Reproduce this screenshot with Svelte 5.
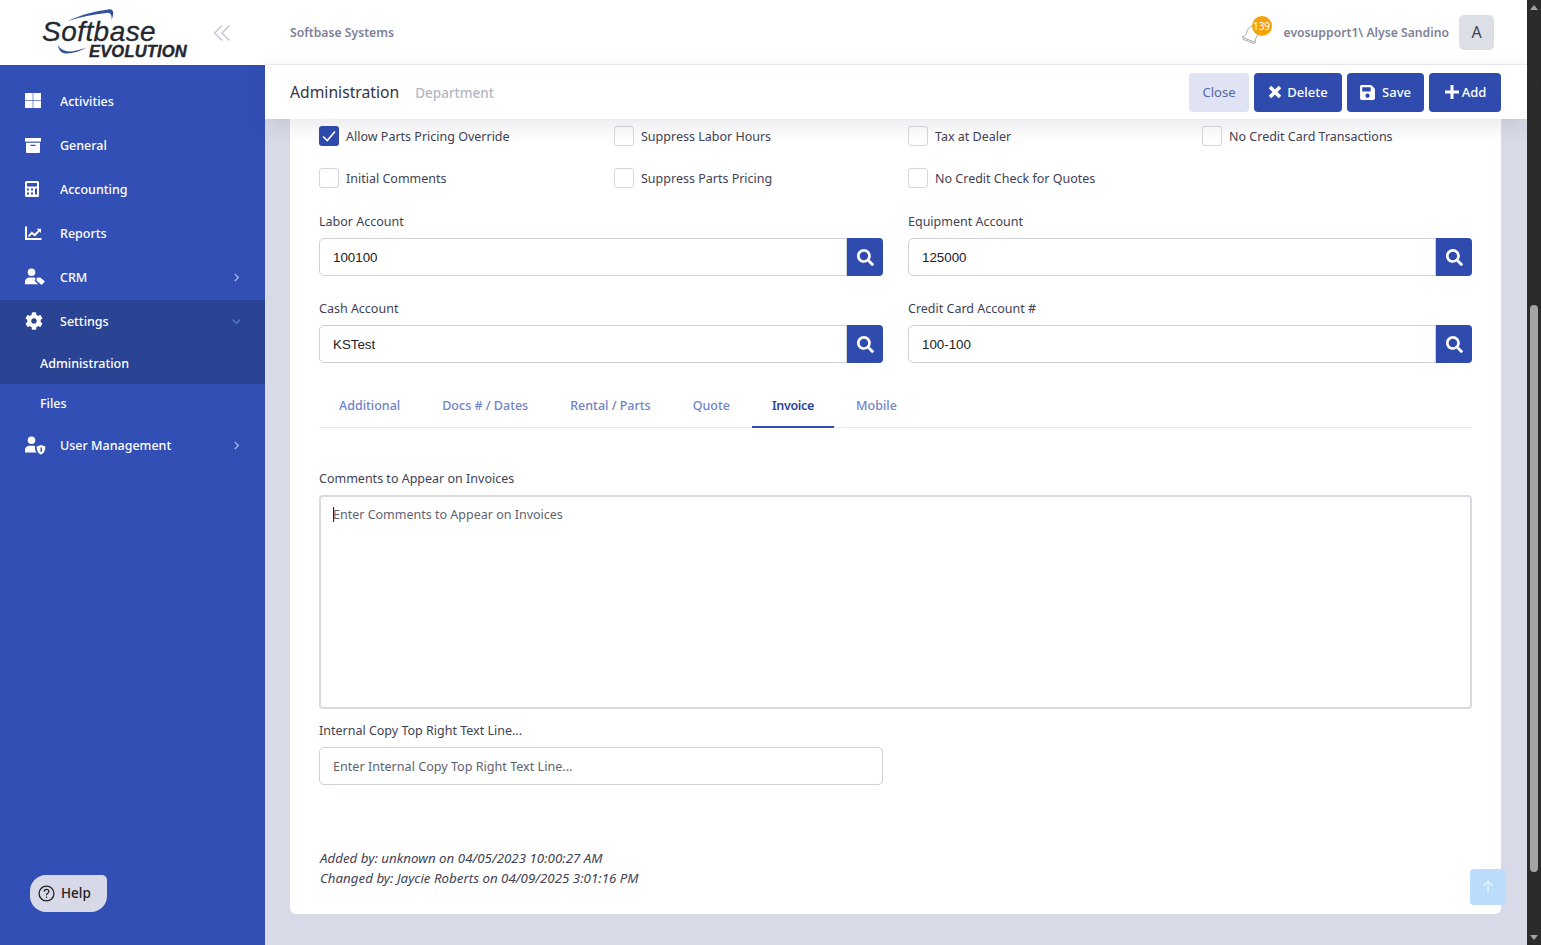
<script>
	const nav = [
		{ name: "Activities", icon: "grid" },
		{ name: "General", icon: "archive" },
		{ name: "Accounting", icon: "calc" },
		{ name: "Reports", icon: "chart" },
		{ name: "CRM", icon: "usertag", arrow: "right" },
	]
	const checks = [
		{ label: "Allow Parts Pricing Override", on: true },
		{ label: "Suppress Labor Hours" },
		{ label: "Tax at Dealer" },
		{ label: "No Credit Card Transactions" },
		{ label: "Initial Comments" },
		{ label: "Suppress Parts Pricing" },
		{ label: "No Credit Check for Quotes" },
	]
	const accounts = [
		{ label: "Labor Account", value: "100100" },
		{ label: "Equipment Account", value: "125000" },
		{ label: "Cash Account", value: "KSTest" },
		{ label: "Credit Card Account #", value: "100-100" },
	]
	const tabs = ["Additional", "Docs # / Dates", "Rental / Parts", "Quote", "Invoice", "Mobile"]
	const cog = "M487.4 315.7l-42.6-24.6c4.3-23.2 4.3-47 0-70.2l42.6-24.6c4.9-2.8 7.1-8.6 5.5-14-11.1-35.6-30-67.8-54.7-94.6-3.8-4.1-10-5.1-14.8-2.3L380.8 110c-17.9-15.4-38.5-27.3-60.8-35.1V25.8c0-5.6-3.9-10.5-9.4-11.7-36.7-8.2-74.3-7.8-109.2 0-5.5 1.2-9.4 6.1-9.4 11.7V75c-22.2 7.9-42.8 19.8-60.8 35.1L88.7 85.5c-4.9-2.8-11-1.9-14.8 2.3-24.7 26.7-43.6 58.9-54.7 94.6-1.7 5.4.6 11.2 5.5 14L67.3 221c-4.3 23.2-4.3 47 0 70.2l-42.6 24.6c-4.9 2.8-7.1 8.6-5.5 14 11.1 35.6 30 67.8 54.7 94.6 3.8 4.1 10 5.1 14.8 2.3l42.6-24.6c17.9 15.4 38.5 27.3 60.8 35.1v49.2c0 5.6 3.9 10.5 9.4 11.7 36.7 8.2 74.3 7.8 109.2 0 5.5-1.2 9.4-6.1 9.4-11.7v-49.2c22.2-7.9 42.8-19.8 60.8-35.1l42.6 24.6c4.9 2.8 11 1.9 14.8-2.3 24.7-26.7 43.6-58.9 54.7-94.6 1.5-5.5-.7-11.3-5.6-14.1zM256 336c-44.1 0-80-35.9-80-80s35.9-80 80-80 80 35.9 80 80-35.9 80-80 80z"
	const search = "M505 442.7L405.3 343c-4.5-4.5-10.6-7-17-7H372c27.6-35.3 44-79.7 44-128C416 93.1 322.9 0 208 0S0 93.1 0 208s93.1 208 208 208c48.3 0 92.7-16.4 128-44v16.3c0 6.4 2.5 12.5 7 17l99.7 99.7c9.4 9.4 24.6 9.4 33.9 0l28.3-28.3c9.4-9.4 9.4-24.6.1-34zM208 336c-70.7 0-128-57.2-128-128 0-70.7 57.2-128 128-128 70.7 0 128 57.2 128 128 0 70.7-57.2 128-128 128z"
	const save = "M433.941 129.941l-83.882-83.882A48 48 0 0 0 316.118 32H48C21.49 32 0 53.49 0 80v352c0 26.51 21.49 48 48 48h352c26.51 0 48-21.49 48-48V163.882a48 48 0 0 0-14.059-33.941zM224 416c-35.346 0-64-28.654-64-64 0-35.346 28.654-64 64-64s64 28.654 64 64c0 35.346-28.654 64-64 64zm96-304.52V212c0 6.627-5.373 12-12 12H76c-6.627 0-12-5.373-12-12V108c0-6.627 5.373-12 12-12h228.52c3.183 0 6.235 1.264 8.485 3.515l3.48 3.48A11.996 11.996 0 0 1 320 111.48z"
</script>

{#snippet navIcon(icon)}
	<svg class="nav-icon" viewBox="0 0 20 20" fill="#fff">
		{#if icon === "grid"}
			<rect x="1" y="2" width="7.700" height="7.200" /><rect x="9.300" y="2" width="7.700" height="7.200" /><rect x="1" y="9.800" width="7.700" height="7.200" /><rect x="9.300" y="9.800" width="7.700" height="7.200" />
		{:else if icon === "archive"}
			<rect x="1" y="3" width="16" height="3.600" /><path d="M2 7.800h14V17a1 1 0 0 1-1 1H3a1 1 0 0 1-1-1zM6.500 9.800v1.200h5V9.800z" fill-rule="evenodd" />
		{:else if icon === "calc"}
			<path d="M2.500 2h11A1.500 1.500 0 0 1 15 3.500v13a1.500 1.500 0 0 1-1.500 1.500h-11A1.500 1.500 0 0 1 1 16.500v-13A1.500 1.500 0 0 1 2.500 2zM3 4v3.500h10V4zM3 9.500v2h2v-2zM7 9.500v2h2v-2zM11 9.500v6h2v-6zM3 13.500v2h2v-2zM7 13.500v2h2v-2z" fill-rule="evenodd" />
		{:else if icon === "chart"}
			<path d="M1 3.500h2v11.500h14.500v2H1z" /><path d="M4.500 12l3.200-3.400 3 2.200 3.400-3.600-1.500-1.500h4.400v4.400l-1.500-1.500-4.600 4.900-3-2.200-3.400 3.300z" />
		{:else if icon === "usertag"}
			<circle cx="7.500" cy="5.200" r="3.800" /><path d="M1 17.200v-2.400c0-2.600 2.200-4.400 4.500-4.400h4.500l1.800.8-1.300 2.300 3.600 3.700z" /><path d="M12.800 10.800l3.400-.4 4.800 4-3.300 3.600-5.200-4.200z" />
		{:else if icon === "usershield"}
			<circle cx="7.500" cy="5.200" r="3.800" /><path d="M1 17.500v-2.400c0-2.600 2.200-4.400 4.500-4.400h4.700l.8.500v2.300c0 1.500.6 2.900 1.700 4z" /><path d="M17 10l4.300 1.500c0 3.800-1 6.700-4.300 8-3.300-1.300-4.300-4.200-4.300-8zM16.500 12.500v4.800l1.500-.8v-4z" fill-rule="evenodd" />
		{/if}
	</svg>
{/snippet}

<div class="page">
	<aside class="sidebar">
		<div class="brand">
			<div class="logo">
				<svg class="swoosh" viewBox="0 0 146 50" fill="#35509f">
					<path d="M26 13C38 7 54 3 66 1.500c5-.8 7 2 3.500 11 .8-5-.8-8-5-7.600C52 6 38 9 26 13z" />
					<path d="M16 37c.500 5 3 8 8 8.500 6 .3 13-2 21-6-8 2.500-15 4.500-20 3.800-4-.6-7-2.800-9-6.300z" />
				</svg>
				<span class="logo-top">Softbase</span>
				<span class="logo-bottom">EVOLUTION</span>
			</div>
			<svg class="collapse" viewBox="0 0 18 18" fill="none" stroke="#c4c9d4" stroke-width="1.600"><path d="M9 1.500L1.500 9 9 16.500M16.500 1.500L9 9l7.500 7.500" /></svg>
		</div>
		<nav class="nav">
			{#each nav as item}
				<div class="nav-row">
					{@render navIcon(item.icon)}
					<span>{item.name}</span>
					{#if item.arrow}
						<svg class="arrow" viewBox="0 0 8 10" fill="none" stroke="#b8c4ea" stroke-width="1.200"><path d="M2 1l4 4-4 4" /></svg>
					{/if}
				</div>
			{/each}
			<div class="open-group">
				<div class="nav-row">
					<svg class="nav-icon" viewBox="-14 -30 540 572" fill="#fff"><path d={cog} /></svg>
					<span>Settings</span>
					<svg class="arrow" viewBox="0 0 10 8" fill="none" stroke="#5f8be6" stroke-width="1.200"><path d="M1 2l4 4 4-4" /></svg>
				</div>
				<div class="sub-row">Administration</div>
			</div>
			<div class="sub-row files">Files</div>
			<div class="nav-row">
				{@render navIcon("usershield")}
				<span>User Management</span>
				<svg class="arrow" viewBox="0 0 8 10" fill="none" stroke="#b8c4ea" stroke-width="1.200"><path d="M2 1l4 4-4 4" /></svg>
			</div>
		</nav>
		<button class="help">
			<svg viewBox="0 0 16 16" width="17" height="17" fill="none" stroke="#222" stroke-width="1.200"><circle cx="8" cy="8" r="7" /><path d="M5.800 6.200C5.900 4.900 6.900 4.200 8 4.200c1.300 0 2.200.8 2.200 1.900 0 1.800-2.200 1.700-2.200 3.500" /><path d="M8 11v1.200" /></svg>
			Help
		</button>
	</aside>

	<main class="main">
		<header class="topbar">
			<span class="company">Softbase Systems</span>
			<div class="user">
				<div class="bell">
					<svg viewBox="0 0 20 20" width="20" height="20" fill="none" stroke="#a3a8b4" stroke-width="1"><path d="M11 2C8 3 6 6 5.500 9 5 11 3 12.500 1 13l13.500 5.500c-.5-2-.2-4 1-5.500 1.500-2 2.300-5 1-7.500-1-2.300-3.500-4-5.500-3.500zM1.500 15l12.500 5" /></svg>
					<span class="badge">139</span>
				</div>
				<span class="username">evosupport1\ Alyse Sandino</span>
				<span class="avatar">A</span>
			</div>
		</header>
		<div class="toolbar">
			<div class="crumbs">
				<span class="crumb-title">Administration</span>
				<span class="crumb-sub">Department</span>
			</div>
			<div class="actions">
				<button class="btn close">Close</button>
				<button class="btn">
					<svg viewBox="0 0 14 14" width="14" height="14" fill="none" stroke="#fff" stroke-width="3.600"><path d="M2 2l10 10M12 2L2 12" /></svg>
					Delete
				</button>
				<button class="btn save-btn">
					<svg viewBox="0 0 448 512" width="15" height="17" fill="#fff"><path d={save} /></svg>
					Save
				</button>
				<button class="btn add-btn">
					<svg viewBox="0 0 16 16" width="16" height="16" fill="none" stroke="#fff" stroke-width="3"><path d="M8 1v14M1 8h14" /></svg>
					Add
				</button>
			</div>
		</div>

		<div class="scroller">
			<section class="card">
				<div class="checks">
					{#each checks as c}
						<div class="check">
							<span class="box" class:on={c.on}>
								{#if c.on}
									<svg viewBox="0 0 20 20" width="20" height="20" fill="none" stroke="#fff" stroke-width="1.700"><path d="M4 10.500l4.300 4L16 5.500" /></svg>
								{/if}
							</span>
							<span>{c.label}</span>
						</div>
					{/each}
				</div>
				<div class="accounts">
					{#each accounts as a}
						<div class="field">
							<div class="label">{a.label}</div>
							<div class="lookup">
								<input class="input mono" value={a.value} />
								<button class="find" aria-label="Search">
									<svg viewBox="0 0 512 512" width="17" height="17" fill="#fff"><path d={search} /></svg>
								</button>
							</div>
						</div>
					{/each}
				</div>
				<div class="tabs">
					{#each tabs as t}
						<div class="tab" class:active={t === "Invoice"}>{t}</div>
					{/each}
				</div>
				<div class="label comments-label">Comments to Appear on Invoices</div>
				<div class="textarea"><span class="caret"></span>Enter Comments to Appear on Invoices</div>
				<div class="label internal-label">Internal Copy Top Right Text Line...</div>
				<input class="input internal" placeholder="Enter Internal Copy Top Right Text Line..." />
				<div class="audit">
					<div>Added by: unknown on 04/05/2023 10:00:27 AM</div>
					<div>Changed by: Jaycie Roberts on 04/09/2025 3:01:16 PM</div>
				</div>
			</section>
			<button class="to-top" aria-label="Back to top">
				<svg viewBox="0 0 14 14" width="14" height="14" fill="none" stroke="#e6f2fe" stroke-width="1.400"><path d="M7 13V1.500M2.500 6L7 1.500 11.500 6" /></svg>
			</button>
		</div>
	</main>

	<div class="scrollbar">
		<span class="tri up"></span>
		<div class="track"><div class="thumb"></div></div>
		<span class="tri down"></span>
	</div>
</div>

<style>
	:global(body) {
		margin: 0;
		overflow: hidden;
		font-family: "Noto Sans", sans-serif;
	}

	.page {
		display: flex;
		width: 1541px;
		height: 945px;
		overflow: hidden;
		font-size: 12.500px;
		color: #3f4254;
		background: #d9dae7;
	}

	button {
		font-family: inherit;
		border: none;
	}

	.sidebar {
		width: 265px;
		flex: none;
		display: flex;
		flex-direction: column;
		background: #324fb5;
		color: #fff;
	}

	.brand {
		height: 65px;
		flex: none;
		display: flex;
		align-items: center;
		background: #fff;
		padding-left: 42px;
		box-sizing: border-box;
	}

	.logo {
		position: relative;
		width: 146px;
		height: 50px;
		color: #25272e;
	}

	.swoosh {
		position: absolute;
		left: 0;
		top: 0;
		width: 146px;
		height: 50px;
	}

	.logo-top {
		position: absolute;
		left: 0;
		top: 12px;
		font: italic 400 28px/24px "Liberation Sans", sans-serif;
		letter-spacing: 0.450px;
		-webkit-text-stroke: 0.300px #25272e;
	}

	.logo-bottom {
		position: absolute;
		right: 1px;
		top: 36px;
		font: italic 700 16.500px/14px "Liberation Sans", sans-serif;
		letter-spacing: 0.200px;
		-webkit-text-stroke: 0.400px #25272e;
	}

	.collapse {
		width: 18px;
		height: 18px;
		margin-left: 25px;
	}

	.nav {
		padding-top: 14px;
		font-weight: 500;
	}

	.nav-row {
		height: 44px;
		display: flex;
		align-items: center;
		padding-left: 24px;
		padding-right: 24px;
		position: relative;
	}

	.nav-row > span {
		flex: 1;
		margin-left: 16px;
	}

	.nav-icon {
		width: 20px;
		height: 20px;
		flex: none;
		overflow: visible;
	}

	.arrow {
		width: 9px;
		height: 9px;
		flex: none;
	}

	.open-group {
		background: #2a4493;
		margin-top: 1px;
	}

	.sub-row {
		display: flex;
		align-items: center;
		padding-left: 40px;
		font-weight: 500;
	}

	.files {
		height: 39px;
	}

	.open-group .nav-row {
		height: 42px;
	}

	.open-group .sub-row {
		height: 42px;
	}

	.help {
		margin: auto 0 33px 30px;
		width: 77px;
		height: 37px;
		display: flex;
		align-items: center;
		gap: 6px;
		padding: 0 0 1px 8px;
		background: #d8d9e8;
		color: #222;
		font-size: 13.500px;
		font-weight: 500;
		border-radius: 16px 5px 16px 16px;
	}

	.main {
		flex: 1;
		min-width: 0;
		display: flex;
		flex-direction: column;
	}

	.topbar {
		height: 65px;
		flex: none;
		box-sizing: border-box;
		display: flex;
		align-items: center;
		justify-content: space-between;
		padding: 0 33px 0 25px;
		background: #fff;
		border-bottom: 1px solid #eceef3;
	}

	.company {
		font-weight: 600;
		font-size: 12.200px;
		color: #7e8299;
	}

	.user {
		display: flex;
		align-items: center;
	}

	.bell {
		position: relative;
		width: 20px;
		height: 20px;
		margin-right: 23px;
		margin-top: 4px;
	}

	.badge {
		position: absolute;
		left: 11px;
		top: -8px;
		width: 20px;
		height: 20px;
		border-radius: 50%;
		background: #f5a30a;
		color: #fff;
		font-size: 10px;
		line-height: 20px;
		text-align: center;
	}

	.username {
		font-weight: 600;
		color: #7e8299;
		font-size: 12.200px;
		margin-right: 10px;
	}

	.avatar {
		width: 35px;
		height: 35px;
		border-radius: 5px;
		background: #dcdfe5;
		color: #3f4254;
		font-size: 16px;
		display: flex;
		align-items: center;
		justify-content: center;
	}

	.toolbar {
		height: 54px;
		flex: none;
		box-sizing: border-box;
		display: flex;
		align-items: center;
		justify-content: space-between;
		padding: 0 26px 0 25px;
		background: #fff;
		box-shadow: 0 6px 22px rgba(60, 60, 90, 0.12);
		position: relative;
		z-index: 2;
	}

	.crumbs {
		display: flex;
		align-items: baseline;
		gap: 16px;
	}

	.crumb-title {
		font-size: 15.700px;
		color: #333541;
	}

	.crumb-sub {
		font-size: 13.500px;
		font-weight: 500;
		color: #b5b5c3;
	}

	.actions {
		display: flex;
		gap: 5px;
	}

	.btn {
		height: 39px;
		display: flex;
		align-items: center;
		justify-content: center;
		gap: 5px;
		background: #2f4bae;
		color: #fff;
		border-radius: 4px;
		font-size: 13px;
		font-weight: 500;
		width: 88px;
		padding: 0;
	}

	.close {
		width: 60px;
		background: #dfe3f3;
		color: #5468a8;
		font-weight: 400;
	}

	.save-btn {
		width: 77px;
		gap: 7px;
	}

	.add-btn {
		width: 72px;
		gap: 2px;
	}

	.scroller {
		flex: 1;
		min-height: 0;
		position: relative;
		padding: 0 26px 0 25px;
	}

	.card {
		height: 795px;
		box-sizing: border-box;
		background: #fff;
		border-radius: 0 0 6px 6px;
		padding: 7px 29px 0 29px;
	}

	.checks {
		display: grid;
		grid-template-columns: 295px 294px 294px 270px;
		row-gap: 22px;
	}

	.check {
		display: flex;
		align-items: center;
		gap: 7px;
		height: 20px;
	}

	.box {
		width: 20px;
		height: 20px;
		box-sizing: border-box;
		border: 1px solid #d5d6dc;
		border-radius: 3px;
		flex: none;
		background: #fff;
	}

	.box.on {
		background: #2f4bae;
		border: none;
	}

	.accounts {
		display: grid;
		grid-template-columns: 564px 564px;
		column-gap: 25px;
		row-gap: 23px;
		margin-top: 24px;
	}

	.label {
		line-height: 20px;
		height: 18px;
		margin-bottom: 8px;
	}

	.lookup {
		display: flex;
		height: 38px;
	}

	.input {
		box-sizing: border-box;
		height: 38px;
		border: 1px solid #cfd1d8;
		border-radius: 5px;
		padding: 0 13px;
		font: 12.600px "Noto Sans", sans-serif;
		color: #222;
		outline: none;
		min-width: 0;
		background: #fff;
	}

	.input::placeholder {
		color: #60636f;
		opacity: 1;
	}

	.mono {
		flex: 1;
		font-family: "Liberation Sans", sans-serif;
		font-size: 13.330px;
		border-radius: 5px 0 0 5px;
	}

	.find {
		width: 36px;
		flex: none;
		background: #2f4bae;
		border-radius: 0 4px 4px 0;
		display: flex;
		align-items: center;
		justify-content: center;
		padding: 0;
	}

	.tabs {
		display: flex;
		gap: 2px;
		margin-top: 23px;
		height: 42px;
		box-sizing: border-box;
		border-bottom: 1px solid #e6e7ee;
	}

	.tab {
		padding: 0 20px;
		line-height: 40px;
		height: 42px;
		box-sizing: border-box;
		color: #6f83c6;
		font-weight: 500;
	}

	.tab.active {
		color: #2a4493;
		font-weight: 600;
		letter-spacing: -0.300px;
		border-bottom: 2px solid #2f4bae;
	}

	.comments-label {
		margin-top: 41px;
	}

	.textarea {
		box-sizing: border-box;
		height: 214px;
		border: 2px solid #d9dadf;
		border-radius: 4px;
		padding: 9px 12px;
		line-height: 18px;
		color: #60636f;
		position: relative;
	}

	.caret {
		position: absolute;
		left: 12px;
		top: 10px;
		width: 1px;
		height: 15px;
		background: #222;
	}

	.internal-label {
		margin-top: 12px;
	}

	.internal {
		display: block;
		width: 564px;
	}

	.audit {
		margin-top: 63px;
		font-style: italic;
		font-size: 13.330px;
		line-height: 20px;
		padding-left: 1px;
		color: #3f4254;
	}

	.to-top {
		position: absolute;
		right: 21px;
		bottom: 40px;
		width: 36px;
		height: 36px;
		border-radius: 4px;
		background: #bcdcfb;
		display: flex;
		align-items: center;
		justify-content: center;
		padding: 0;
	}

	.scrollbar {
		width: 14px;
		flex: none;
		background: #2b2b2b;
		display: flex;
		flex-direction: column;
		align-items: center;
	}

	.track {
		flex: 1;
		width: 100%;
		position: relative;
	}

	.thumb {
		position: absolute;
		left: 3px;
		right: 3px;
		top: 290px;
		bottom: 58px;
		border-radius: 4px;
		background: #a3a3a3;
	}

	.tri {
		width: 0;
		height: 0;
		margin: 5px 0;
		border-left: 4px solid transparent;
		border-right: 4px solid transparent;
	}

	.up {
		border-bottom: 5px solid #a3a3a3;
	}

	.down {
		border-top: 5px solid #a3a3a3;
	}
</style>
